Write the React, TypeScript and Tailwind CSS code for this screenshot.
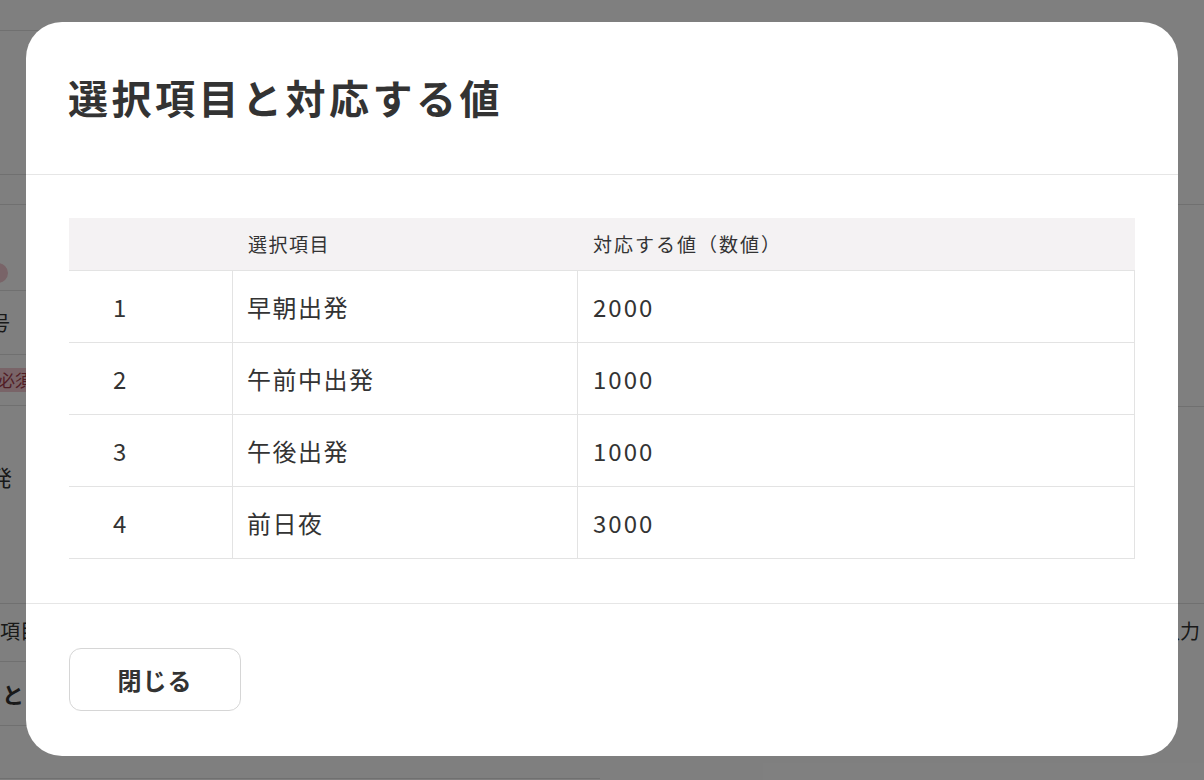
import React from "react";

const rows = [
  { no: "1", label: "早朝出発", value: "2000" },
  { no: "2", label: "午前中出発", value: "1000" },
  { no: "3", label: "午後出発", value: "1000" },
  { no: "4", label: "前日夜", value: "3000" },
];

const font = { fontFamily: '"Noto Sans CJK JP", "Noto Sans", sans-serif' };

export default function App() {
  return (
    <div className="relative h-[780px] w-[1204px] overflow-hidden bg-white text-[#333]" style={font}>
      <BackgroundPage />

      {/* overlay + dialog */}
      <div className="absolute inset-0 flex justify-center bg-black/50 pt-[22px]">
        <div className="flex h-fit w-[1152px] flex-col rounded-[36px] bg-white">
          <div className="flex h-[153px] items-center border-b border-[#e6e6e6] pl-[42px] pb-[2px]">
            <h2 className="text-[40px] font-bold leading-none tracking-[3.5px] text-[#333]">選択項目と対応する値</h2>
          </div>

          <div className="px-[43px] pt-[43px] pb-[44px]">
            <div className="w-full">
              <div className="grid h-[53px] grid-cols-[164px_345px_1fr] items-center border-b border-[#e3e3e3] bg-[#f4f2f3] text-[19px] tracking-[1.5px]">
                <div />
                <div className="pl-[15px]">選択項目</div>
                <div className="pl-[15px] tracking-[2px]">対応する値（数値）</div>
              </div>
              {rows.map((r) => (
                <div key={r.no} className="grid h-[72px] grid-cols-[164px_345px_1fr] border-b border-[#e3e3e3] text-[24px]">
                  <div className="flex items-center border-r border-[#e3e3e3] pl-[44px] tracking-[1px]">{r.no}</div>
                  <div className="flex items-center border-r border-[#e3e3e3] pl-[14px] tracking-[1.5px]">{r.label}</div>
                  <div className="flex items-center border-r border-[#e3e3e3] pl-[15px] tracking-[2px]">{r.value}</div>
                </div>
              ))}
            </div>
          </div>

          <div className="border-t border-[#e6e6e6] px-[43px] pt-[44px] pb-[45px]">
            <button className="h-[63px] w-[172px] rounded-[12px] border border-[#d6d6d6] bg-white text-[24px] font-bold tracking-[1px] text-[#333]">
              閉じる
            </button>
          </div>
        </div>
      </div>
    </div>
  );
}

function BackgroundPage() {
  return (
    <div className="flex h-full w-full">
      <div className="w-[600px] text-[20px]">
        <div className="h-[31px] border-b border-[#e0e0e0]" />
        <div className="h-[144px] border-b border-[#e0e0e0]" />
        <div className="h-[30px] border-b border-[#e0e0e0]" />
        <div className="flex h-[86px] items-end border-b border-[#e0e0e0] pb-[7px]">
          <span className="-ml-[20px] h-[20px] w-[28px] rounded-full bg-[#f2c9d0]" />
        </div>
        <div className="flex h-[64px] items-center border-b border-[#e0e0e0]">
          <span className="-ml-[10px]">号</span>
        </div>
        <div className="flex h-[51px] items-center border-b border-[#e0e0e0]">
          <span className="-ml-[6px] rounded-[6px] bg-[#f2c9d0] px-[4px] text-[17px] leading-[24px] text-[#a33a4a]">必須</span>
        </div>
        <div className="flex h-[198px] items-center border-b border-[#e0e0e0] pb-[56px]">
          <span className="-ml-[10px] text-[22px]">発</span>
        </div>
        <div className="flex h-[58px] items-center border-b border-[#e0e0e0] pb-[4px]">
          <span>項目</span>
        </div>
        <div className="flex h-[64px] items-center border-b border-[#e0e0e0]">
          <span className="ml-[2px] text-[22px] font-bold">と</span>
        </div>
        <div className="h-[53px] border-b border-[#e0e0e0]" />
      </div>
      <div className="flex-1 text-[20px]">
        <div className="h-[205px] border-b border-[#e0e0e0]" />
        <div className="h-[202px] border-b border-[#e0e0e0]" />
        <div className="h-[197px] border-b border-[#e0e0e0]" />
        <div className="flex h-[54px] items-center pl-[560px]">
          <span className="whitespace-nowrap">入力</span>
        </div>
      </div>
    </div>
  );
}
